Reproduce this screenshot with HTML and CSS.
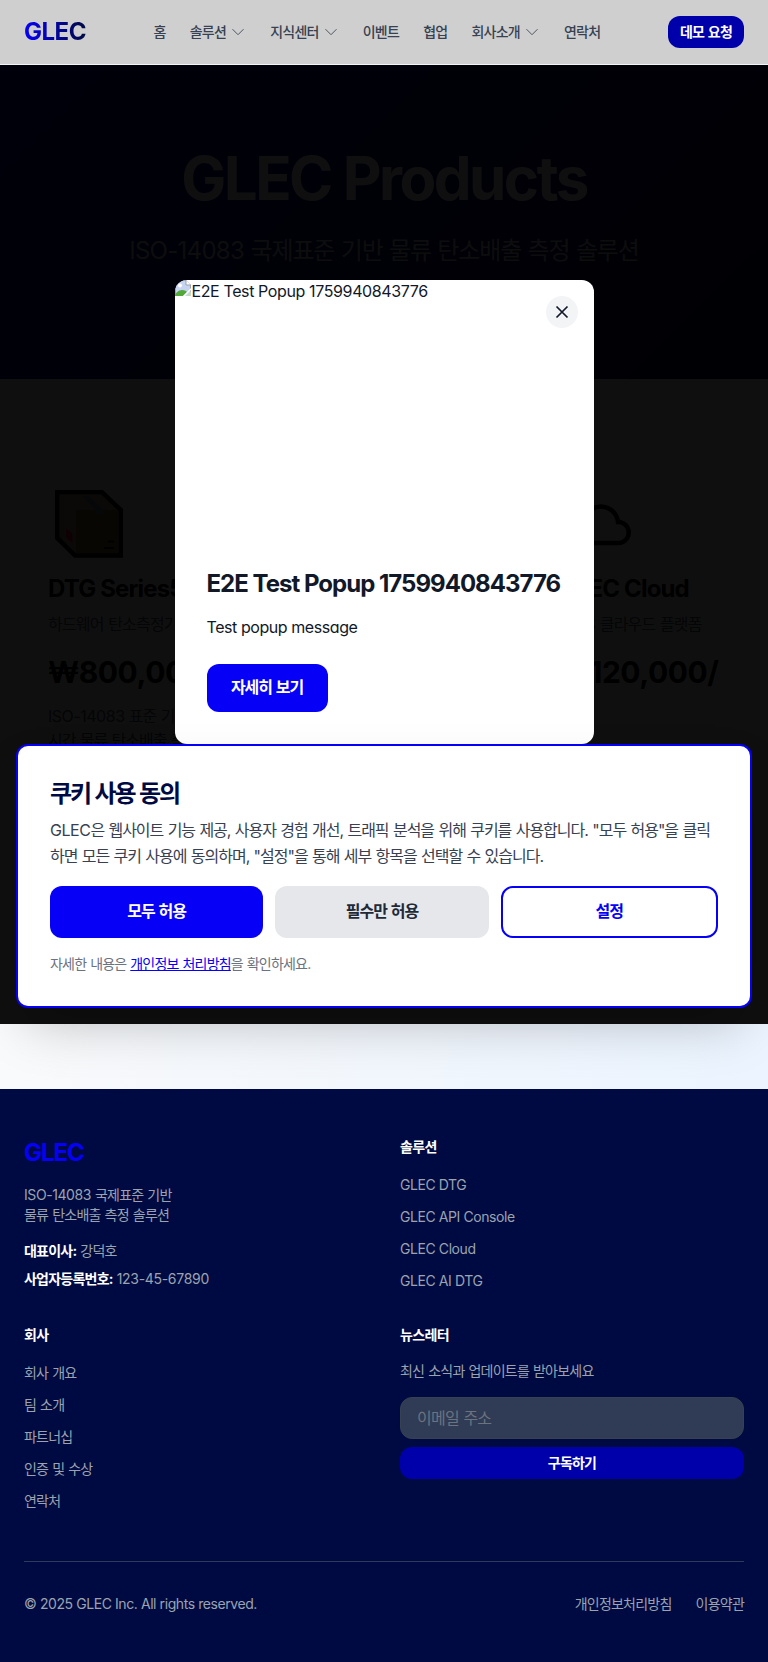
FILE: index.html
```html
<!DOCTYPE html>
<html lang="ko">
<head>
<meta charset="utf-8">
<title>GLEC Products</title>
<link rel="stylesheet" href="styles.css">
</head>
<body>
<header class="header">
  <a class="logo">GLEC</a>
  <nav class="nav">
    <a>홈</a>
    <a>솔루션<svg viewBox="0 0 16 16"><path d="M2.500 5.200 8 10.700l5.500-5.500"/></svg></a>
    <a>지식센터<svg viewBox="0 0 16 16"><path d="M2.500 5.200 8 10.700l5.500-5.500"/></svg></a>
    <a>이벤트</a>
    <a>협업</a>
    <a>회사소개<svg viewBox="0 0 16 16"><path d="M2.500 5.200 8 10.700l5.500-5.500"/></svg></a>
    <a>연락처</a>
  </nav>
  <a class="demo">데모 요청</a>
</header>

<main class="main">
  <section class="hero">
    <h1>GLEC Products</h1>
    <p><span class="en">ISO-14083</span> 국제표준 기반 물류 탄소배출 측정 솔루션</p>
  </section>
  <section class="products">
    <article class="card">
      <svg class="icon" viewBox="0 0 80 80">
        <path d="M9.200 5.200H54L72.800 23v45.600H27L9.200 51z" fill="#a89480" stroke="#000" stroke-width="4.500"/>
        <path d="M11.500 7.500H53L68.500 23H28z" fill="#a89480"/>
        <path d="M28 23h42.500v43H28z" fill="#84683a"/>
        <path d="m34 9 14 14v4h7v-4L41 9z" fill="#607088"/>
        <path d="m18 41 6.500 6v9L18 50z" fill="#ff0030"/>
        <path d="M60 53.500h6v2h-6zM56 60h10v2H56z" fill="#000"/>
      </svg>
      <h2>DTG Series5</h2>
      <p class="kind">하드웨어 탄소측정기</p>
      <p class="price">₩800,000</p>
      <p class="desc"><span class="en">ISO-14083</span> 표준 기반 실<br>시간 물류 탄소배출 측정</p>
    </article>
    <article class="card"></article>
    <article class="card">
      <svg class="icon" viewBox="0 0 80 80">
        <path d="M59.500 56H20a12 12 0 0 1-1-24 8 8 0 0 1 7-1A17 17 0 0 1 59 35a10.500 10.500 0 0 1 .5 21z" fill="none" stroke="#000" stroke-width="4.500"/>
      </svg>
      <h2>GLEC Cloud</h2>
      <p class="kind"><span class="en">SaaS</span> 클라우드 플랫폼</p>
      <p class="price">₩120,000/</p>
    </article>
  </section>
  <section class="cta"></section>

  <div class="overlay">
    <div class="popup">
      <div class="popup-image">
        <svg width="16" height="16" viewBox="0 0 16 16">
          <path d="M0 0h11l5 5v11H0z" fill="#c6d4f1"/><path d="M.5 16V.5H11L15.500 5v11" fill="none" stroke="#9ba3ad"/>
          <path d="M11 0v5h5" fill="#fff" stroke="#9ba3ad"/>
          <circle cx="5" cy="5.500" r="2" fill="#fff"/>
          <path d="M0 16c0-3 4-6 7-6s4 1 5 2l-4 4z" fill="#53a83a"/>
          <path d="m8 16 8-8v2l-6 6z" fill="#fff"/><path d="m11 16 5-5v5z" fill="#c6dcc1"/>
        </svg><span>E2E Test Popup 1759940843776</span>
      </div>
      <button class="close" aria-label="닫기"><svg viewBox="0 0 20 20"><path d="m4.500 4.500 11 11m0-11-11 11"/></svg></button>
      <div class="popup-body">
        <h2>E2E Test Popup 1759940843776</h2>
        <p>Test popup message</p>
        <a class="more">자세히 보기</a>
      </div>
    </div>
  </div>

  <aside class="cookie">
    <h3>쿠키 사용 동의</h3>
    <p class="cookie-text"><span class="en">GLEC</span>은 웹사이트 기능 제공, 사용자 경험 개선, 트래픽 분석을 위해 쿠키를 사용합니다. "모두 허용"을 클릭<br>하면 모든 쿠키 사용에 동의하며, "설정"을 통해 세부 항목을 선택할 수 있습니다.</p>
    <div class="cookie-actions">
      <button class="all">모두 허용</button>
      <button class="required">필수만 허용</button>
      <button class="settings">설정</button>
    </div>
    <p class="cookie-note">자세한 내용은 <a>개인정보 처리방침</a>을 확인하세요.</p>
  </aside>
</main>

<footer class="footer">
  <div class="footer-grid">
    <div class="about">
      <div class="footer-logo">GLEC</div>
      <p class="about-text"><span class="en">ISO-14083</span> 국제표준 기반<br>물류 탄소배출 측정 솔루션</p>
      <p><strong>대표이사:</strong> 강덕호</p>
      <p><strong>사업자등록번호:</strong> <span class="en num">123-45-67890</span></p>
    </div>
    <div>
      <h4>솔루션</h4>
      <ul class="en">
        <li>GLEC DTG</li><li>GLEC API Console</li><li>GLEC Cloud</li><li>GLEC AI DTG</li>
      </ul>
    </div>
    <div>
      <h4>회사</h4>
      <ul>
        <li>회사 개요</li><li>팀 소개</li><li>파트너십</li><li>인증 및 수상</li><li>연락처</li>
      </ul>
    </div>
    <div class="newsletter">
      <h4>뉴스레터</h4>
      <p>최신 소식과 업데이트를 받아보세요</p>
      <input type="email" placeholder="이메일 주소">
      <button>구독하기</button>
    </div>
  </div>
  <div class="legal">
    <span class="en">© 2025 GLEC Inc. All rights reserved.</span>
    <div class="legal-links"><a>개인정보처리방침</a><a>이용약관</a></div>
  </div>
</footer>
</body>
</html>
```
FILE: styles.css
```css
* { box-sizing: border-box; margin: 0; padding: 0; }
body {
  font-family: Inter, "Noto Sans CJK KR", sans-serif;
  font-size: 16px;
  line-height: 24px;
  letter-spacing: -0.062em;
  word-spacing: 0.05em;
  color: #111827;
  background: #fff;
}
button, input { font: inherit; letter-spacing: inherit; word-spacing: inherit; border: 0; }
ul { list-style: none; }
svg { display: block; flex: none; }
.en { letter-spacing: -0.03em; word-spacing: 0; }

.header {
  display: flex;
  align-items: center;
  justify-content: space-between;
  height: 65px;
  padding: 0 24px;
  background: #cfcfcf;
  border-bottom: 1px solid #f3f4f6;
}
.logo {
  font-size: 24px;
  line-height: 32px;
  font-weight: 700;
  letter-spacing: -0.02em;
  background: linear-gradient(90deg, #0600f7, #000a42);
  -webkit-background-clip: text;
  background-clip: text;
  color: transparent;
}
.nav { display: flex; gap: 24px; font-size: 14px; line-height: 20px; letter-spacing: -0.74px; font-weight: 500; color: #374151; }
.nav a { display: flex; align-items: center; gap: 4px; white-space: nowrap; }
.nav svg { width: 16px; height: 16px; fill: none; stroke: #4b5563; stroke-width: 1; }
.demo {
  width: 76px;
  height: 32px;
  border-radius: 12px;
  background: #0000aa;
  color: #fff;
  font-size: 14px;
  line-height: 32px;
  font-weight: 700;
  letter-spacing: -0.7px;
  text-align: center;
}

.main { position: relative; }
.hero {
  height: 314px;
  padding-top: 80px;
  text-align: center;
  background: linear-gradient(135deg, #0000aa, #000a42);
}
.hero h1 { font-size: 60px; line-height: 66px; font-weight: 700; letter-spacing: -0.042em; word-spacing: 0; color: #fff; }
.hero p { margin-top: 24px; font-size: 24px; line-height: 32px; letter-spacing: -0.047em; color: #d1d5db; }
.hero .en { letter-spacing: -0.03em; }
.products {
  display: grid;
  grid-template-columns: repeat(3, minmax(0, 1fr));
  gap: 94px;
  height: 645px;
  padding: 108px 48px 0;
  background: #fff;
}
.card { white-space: nowrap; }
.icon { width: 80px; height: 80px; }
.card h2 { margin-top: 6px; font-size: 24px; line-height: 32px; letter-spacing: -0.035em; word-spacing: 0; color: #000; }
.kind { margin-top: 7px; letter-spacing: -0.05em; color: #4b5563; }
.price { margin-top: 18px; font-size: 30px; line-height: 36px; font-weight: 700; letter-spacing: -0.015em; color: #000; }
.desc { margin-top: 14px; color: #4b5563; }
.cta { height: 65px; background: linear-gradient(100deg, #f9fafb, #ebf4ff); }

.overlay {
  position: absolute;
  z-index: 1;
  top: -65px;
  left: 0;
  display: flex;
  align-items: center;
  justify-content: center;
  width: 100%;
  height: 1024px;
  background: rgba(0, 0, 0, 0.94);
  clip-path: inset(65px 0 0);
}
.popup { position: relative; width: 419px; height: 464px; border-radius: 12px; background: #fff; overflow: hidden; }
.popup-image { display: flex; height: 256px; gap: 1px; letter-spacing: -0.024em; word-spacing: 0; line-height: 22px; }
.close {
  position: absolute;
  top: 16px;
  right: 16px;
  display: flex;
  align-items: center;
  justify-content: center;
  width: 32px;
  height: 32px;
  border-radius: 50%;
  background: #f3f4f6;
}
.close svg { width: 20px; height: 20px; fill: none; stroke: #111827; stroke-width: 1.7; }
.popup-body { padding: 32px; }
.popup-body h2 { font-size: 24px; line-height: 32px; letter-spacing: -0.041em; word-spacing: 0; white-space: nowrap; }
.popup-body p { margin: 15px 0 25px; letter-spacing: -0.027em; word-spacing: 0; line-height: 24px; font-feature-settings: "cv11"; }
.more {
  display: block;
  width: 121px;
  padding-bottom: 2px;
  border-radius: 12px;
  background: #0600f7;
  color: #fff;
  font-weight: 700;
  line-height: 46px;
  text-align: center;
}

.cookie {
  position: absolute;
  z-index: 2;
  top: 679px;
  left: 16px;
  right: 16px;
  height: 264px;
  padding: 32px;
  border: 2px solid #0600f7;
  border-radius: 12px;
  background: #fff;
  box-shadow: 0 25px 50px -12px rgba(0, 0, 0, 0.25);
}
.cookie h3 { font-size: 24px; line-height: 32px; letter-spacing: -0.085em; color: #000a42; }
.cookie-text { margin-top: 7px; line-height: 26px; color: #374151; white-space: nowrap; }
.cookie-actions { display: flex; gap: 12px; margin-top: 17px; }
.cookie-actions button { flex: 1; height: 52px; padding-bottom: 2px; border-radius: 12px; font-weight: 600; }
.cookie-actions .all { background: #0600f7; color: #fff; }
.cookie-actions .required { background: #e5e7eb; color: #1f2937; }
.cookie-actions .settings { background: #fff; border: 2px solid #0600f7; color: #0600f7; }
.cookie-note { margin-top: 16px; font-size: 14px; line-height: 20px; letter-spacing: -0.81px; color: #6b7280; }
.cookie-note a { color: #0600f7; text-decoration: underline; }

.footer { height: 573px; padding: 48px 24px 0; background: #000a42; color: #9ca3af; font-size: 14px; line-height: 20px; letter-spacing: -0.77px; }
.footer .en { letter-spacing: -0.42px; }
.footer-grid { display: grid; grid-template-columns: 1fr 1fr; grid-template-rows: 156px auto; gap: 32px; height: 424px; }
.footer-logo { font-size: 24px; line-height: 32px; font-weight: 700; letter-spacing: -0.045em; color: #0600f7; }
.about-text { margin: 16px 0; }
.about p + p { margin-top: 8px; }
.about .about-text + p { margin-top: 16px; }
.footer strong, .footer h4 { color: #fff; font-weight: 700; }
.footer h4 { margin-bottom: 16px; font-size: 14px; line-height: 20px; letter-spacing: -0.6px; }
.footer li { height: 32px; line-height: 24px; }
.newsletter p { margin-bottom: 16px; }
.newsletter input {
  display: block;
  width: 100%;
  height: 42px;
  padding: 0 16px;
  border: 1px solid #374151;
  border-radius: 12px;
  background: #303c55;
  font-size: 16px;
}
.newsletter input::placeholder { color: #6b7280; }
.newsletter button { display: block; width: 100%; height: 32px; margin-top: 8px; border-radius: 12px; background: #0000aa; color: #fff; font-weight: 700; }
.legal { display: flex; justify-content: space-between; padding-top: 32px; border-top: 1px solid #303c55; }
.legal-links { display: flex; gap: 24px; }
.footer .num { letter-spacing: -0.3px; }
```
